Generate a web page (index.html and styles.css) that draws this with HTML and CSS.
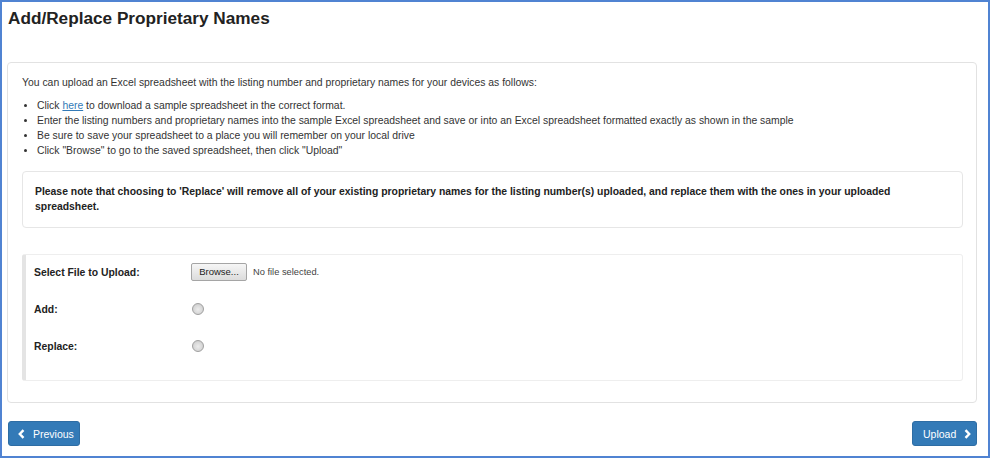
FILE: index.html
```html
<!DOCTYPE html>
<html>
<head>
<meta charset="utf-8">
<link rel="stylesheet" href="styles.css">
</head>
<body>
<div class="frame">
  <h1 class="title">Add/Replace Proprietary Names</h1>
  <div class="panel">
    <p class="intro">You can upload an Excel spreadsheet with the listing number and proprietary names for your devices as follows:</p>
    <ul class="steps">
      <li>Click <a href="#" class="link">here</a> to download a sample spreadsheet in the correct format.</li>
      <li>Enter the listing numbers and proprietary names into the sample Excel spreadsheet and save or into an Excel spreadsheet formatted exactly as shown in the sample</li>
      <li>Be sure to save your spreadsheet to a place you will remember on your local drive</li>
      <li>Click "Browse" to go to the saved spreadsheet, then click "Upload"</li>
    </ul>
    <div class="note">Please note that choosing to 'Replace' will remove all of your existing proprietary names for the listing number(s) uploaded, and replace them with the ones in your uploaded spreadsheet.</div>
    <div class="well">
      <div class="row">
        <div class="label">Select File to Upload:</div>
        <div class="control">
          <span class="browse">Browse...</span>
          <span class="nofile">No file selected.</span>
        </div>
      </div>
      <div class="row">
        <div class="label">Add:</div>
        <div class="control"><span class="radio"></span></div>
      </div>
      <div class="row">
        <div class="label">Replace:</div>
        <div class="control"><span class="radio"></span></div>
      </div>
    </div>
  </div>
  <div class="actions">
    <button class="btn btn-prev">
      <svg class="chev" width="7" height="10" viewBox="0 0 7 10"><polyline points="5.5,1.2 1.8,5 5.5,8.8" fill="none" stroke="#fff" stroke-width="2.4"/></svg>
      <span>Previous</span>
    </button>
    <button class="btn btn-next">
      <span>Upload</span>
      <svg class="chev" width="7" height="10" viewBox="0 0 7 10"><polyline points="1.5,1.2 5.2,5 1.5,8.8" fill="none" stroke="#fff" stroke-width="2.4"/></svg>
    </button>
  </div>
</div>
</body>
</html>
```
FILE: styles.css
```css
html, body {
  margin: 0;
  padding: 0;
  background: #fff;
}
body {
  font-family: "Liberation Sans", Arial, sans-serif;
  font-size: 10.4px;
  color: #333;
}
.frame {
  width: 990px;
  height: 458px;
  box-sizing: border-box;
  border: 2px solid #5083d2;
  padding: 6px 11px 0 5px;
  overflow: hidden;
}
.title {
  margin: 0 0 34px 1px;
  font-size: 17.2px;
  line-height: 20px;
  font-weight: bold;
  color: #222;
}
.panel {
  border: 1px solid #e2e2e2;
  border-radius: 4px;
  padding: 12px 13px 21px 14px;
}
.intro {
  margin: 0 0 8px 0;
  line-height: 15px;
}
.steps {
  margin: 0 0 13px 0;
  padding-left: 15px;
  line-height: 15px;
}
.link {
  color: #337ab7;
  text-decoration: underline;
}
.note {
  border: 1px solid #e6e6e6;
  border-radius: 4px;
  padding: 12px 12px 13px 12px;
  font-weight: bold;
  line-height: 15px;
  color: #222;
  margin-bottom: 26px;
}
.well {
  border: 1px solid #eeeeee;
  border-left: 4px solid #e4e4e4;
  border-radius: 3px;
  padding: 6px 8px 23px 8px;
  display: flex;
  flex-direction: column;
  gap: 15px;
}
.row {
  display: flex;
  align-items: center;
  height: 22px;
}
.label {
  width: 157px;
  font-weight: bold;
  color: #222;
}
.control {
  display: flex;
  align-items: center;
  gap: 6px;
}
.browse {
  display: inline-block;
  box-sizing: border-box;
  width: 56px;
  height: 18px;
  line-height: 16px;
  text-align: center;
  font-size: 9.5px;
  color: #222;
  border: 1px solid #a5a5a5;
  border-radius: 2px;
  background: linear-gradient(#f6f6f6, #dcdcdc);
}
.nofile {
  font-size: 9.3px;
  color: #444;
}
.radio {
  display: inline-block;
  box-sizing: border-box;
  width: 12px;
  height: 12px;
  margin-left: 1px;
  border: 1px solid #a0a0a0;
  border-radius: 50%;
  background: radial-gradient(circle at 50% 55%, #ececec 0%, #d8d8d8 55%, #c2c2c2 100%);
}
.actions {
  display: flex;
  justify-content: space-between;
  margin-top: 18px;
  padding-left: 1px;
}
.btn {
  display: flex;
  align-items: center;
  box-sizing: border-box;
  height: 25px;
  border: 1px solid #2e6da4;
  border-radius: 3px;
  background: #337ab7;
  color: #fff;
  font-family: "Liberation Sans", Arial, sans-serif;
  font-size: 10.5px;
  cursor: pointer;
}
.btn-prev {
  width: 72px;
  padding: 0 0 0 9px;
  gap: 8px;
}
.btn-next {
  width: 65px;
  padding: 0 0 0 10px;
  gap: 8px;
}
.chev {
  display: block;
}
```
